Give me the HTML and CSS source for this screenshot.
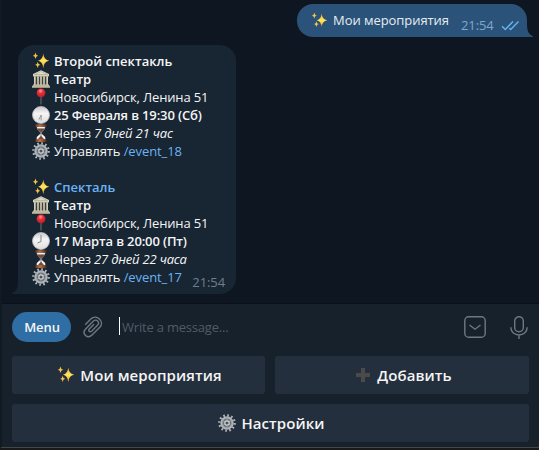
FILE: index.html
```html
<!DOCTYPE html>
<html lang="ru">
<head>
<meta charset="utf-8">
<title>Чат</title>
<link rel="stylesheet" href="styles.css">
</head>
<body>
<svg class="defs" aria-hidden="true">
  <defs>
    <linearGradient id="gold" x1="0" y1="0" x2="0" y2="1"><stop offset="0" stop-color="#f0a72c"/><stop offset=".5" stop-color="#ffe65c"/><stop offset="1" stop-color="#e99a22"/></linearGradient>
    <radialGradient id="red" cx=".45" cy=".3" r=".7"><stop offset="0" stop-color="#ff9a9e"/><stop offset=".4" stop-color="#e8303a"/><stop offset="1" stop-color="#c41a26"/></radialGradient>
    <linearGradient id="face" x1="0" y1="0" x2="0" y2="1"><stop offset="0" stop-color="#c9c9cb"/><stop offset=".4" stop-color="#f4f4f4"/><stop offset="1" stop-color="#dededf"/></linearGradient>
    <linearGradient id="stone" x1="0" y1="0" x2="0" y2="1"><stop offset="0" stop-color="#e6e2cd"/><stop offset="1" stop-color="#c4bfa6"/></linearGradient>
    <linearGradient id="wood" x1="0" y1="0" x2="1" y2="0"><stop offset="0" stop-color="#6b3417"/><stop offset=".4" stop-color="#b8734a"/><stop offset="1" stop-color="#55260f"/></linearGradient>
  </defs>
  <symbol id="sparkles" viewBox="0 0 18 18">
    <path fill="url(#gold)" d="M11.3 1.6Q11.7 8 17.2 8.7Q11.7 9.5 11.3 16.2Q10.7 9.5 6 8.7Q10.7 8 11.3 1.6Z"/>
    <path fill="#f5c544" d="M3.5 .5Q3.7 3.3 6.2 3.7Q3.7 4.1 3.5 7Q3.2 4.1 .9 3.7Q3.2 3.3 3.5 .5ZM5.7 9.8Q5.9 12.4 8.2 12.8Q5.9 13.2 5.7 16Q5.4 13.2 3.2 12.8Q5.4 12.4 5.7 9.8Z"/>
  </symbol>
  <symbol id="temple" viewBox="0 0 18 18">
    <path fill="#3c403c" d="M2 6h14v9H2z"/>
    <path fill="url(#stone)" d="M9 .3L17 4v2.200H1V4zM2 6h1.700v9H2zM5.200 6h1.600v9H5.200zM8.200 6h1.600v9H8.200zM11.200 6h1.600v9h-1.600zM14.300 6H16v9h-1.700zM1 14.500h16v1.500H1zM0 16h18v1.700H0z"/>
    <path fill="none" stroke="#a5a18b" stroke-width=".6" d="M2.500 4.500L9 1.500l6.500 3zM1 6.200h16M0 16h18"/>
  </symbol>
  <symbol id="pin" viewBox="0 0 18 18">
    <path stroke="#6d7379" stroke-width="1" d="M9 8v8.500"/>
    <circle cx="9" cy="4.800" r="4.400" fill="url(#red)"/>
  </symbol>
  <symbol id="clock-half" viewBox="0 0 18 18">
    <circle cx="9" cy="9" r="8.500" fill="url(#face)" stroke="#bcbdc0" stroke-width=".8"/>
    <path fill="none" stroke="#85878b" stroke-width=".8" d="M9.200 9v5.500M9.200 9L7 13.500"/>
  </symbol>
  <symbol id="clock-eight" viewBox="0 0 18 18">
    <circle cx="9" cy="9" r="8.500" fill="url(#face)" stroke="#bcbdc0" stroke-width=".8"/>
    <path fill="none" stroke="#777a7f" stroke-width=".9" d="M9 3v6.500L5.500 11"/>
  </symbol>
  <symbol id="hourglass" viewBox="0 0 18 18">
    <path fill="#7d878f" d="M4.500 2h9c0 4-2.800 5-3.800 7 1 2 3.800 3 3.800 7h-9c0-4 2.800-5 3.800-7-1-2-3.800-3-3.800-7z"/>
    <path fill="#7c4a34" d="M5.500 4.800h7Q12 6.800 9 8.300Q6 6.800 5.500 4.800zM9 11.500l3.500 4h-7z"/>
    <path fill="#f4f4f2" d="M5.200 3h7.600v1.300H5.200zM4.800 13L8.500 10v2L6 15H4.800zM13.200 13L9.500 10v2L12 15h1.200z"/>
    <rect x="3.300" y=".2" width="11.400" height="2.600" rx="1" fill="url(#wood)"/>
    <rect x="3.300" y="15.200" width="11.400" height="2.700" rx="1" fill="url(#wood)"/>
  </symbol>
  <symbol id="gear" viewBox="0 0 18 18">
    <circle cx="9" cy="9" r="7.700" fill="none" stroke="#b0b4b8" stroke-width="2.300" stroke-dasharray="1.700 2.332"/>
    <circle cx="9" cy="9" r="5.600" fill="#6b737a" stroke="#afb4b8" stroke-width="2.200"/>
    <path stroke="#959ca2" stroke-width=".9" d="M9 3.500v11M4.200 6.200l9.600 5.600M4.200 11.800l9.600-5.600"/>
    <circle cx="9" cy="9" r="2.200" fill="#4a535b" stroke="#d1d4d6" stroke-width="1.200"/>
  </symbol>
  <symbol id="plus" viewBox="0 0 18 18"><path fill="#4a4a4a" d="M7 2h4v5h5v4h-5v5H7v-5H2V7h5z"/></symbol>
</svg>

<main class="app">
  <section class="chat">
    <article class="bubble bubble-out">
      <svg class="emoji emoji-small"><use href="#sparkles"/></svg>
      <span class="out-text">Мои мероприятия</span>
      <time class="time time-out">21:54</time>
      <svg class="checks" viewBox="0 0 19 11"><path d="M1 6.300l3.300 3.200L12 1.500M8.300 8.300l1.400 1.200L17.500 1.500"/></svg>
      <svg class="tail tail-out" viewBox="0 0 8 14"><path d="M0 0h2c0 7 1 11 6 13.200V14H0z"/></svg>
    </article>

    <article class="bubble bubble-in">
      <p class="line"><svg class="emoji"><use href="#sparkles"/></svg><b>Второй спектакль</b></p>
      <p class="line"><svg class="emoji"><use href="#temple"/></svg><b>Театр</b></p>
      <p class="line place"><svg class="emoji"><use href="#pin"/></svg><span>Новосибирск, Ленина 51</span></p>
      <p class="line date"><svg class="emoji"><use href="#clock-half"/></svg><b>25 Февраля в 19:30 (Сб)</b></p>
      <p class="line left"><svg class="emoji"><use href="#hourglass"/></svg><span>Через <i>7 дней 21 час</i></span></p>
      <p class="line manage"><svg class="emoji"><use href="#gear"/></svg><span>Управлять <a>/event_18</a></span></p>
      <p class="line"></p>
      <p class="line"><svg class="emoji"><use href="#sparkles"/></svg><b class="link">Спекталь</b></p>
      <p class="line"><svg class="emoji"><use href="#temple"/></svg><b>Театр</b></p>
      <p class="line place"><svg class="emoji"><use href="#pin"/></svg><span>Новосибирск, Ленина 51</span></p>
      <p class="line date"><svg class="emoji"><use href="#clock-eight"/></svg><b>17 Марта в 20:00 (Пт)</b></p>
      <p class="line left"><svg class="emoji"><use href="#hourglass"/></svg><span>Через <i>27 дней 22 часа</i></span></p>
      <p class="line manage"><svg class="emoji"><use href="#gear"/></svg><span>Управлять <a>/event_17</a></span><time class="time time-in">21:54</time></p>
      <svg class="tail tail-in" viewBox="0 0 8 14"><path d="M8 0H6c0 7-1 11-6 13.200V14h8z"/></svg>
    </article>
  </section>

  <section class="panel">
    <div class="composer">
      <button class="menu">Menu</button>
      <svg class="clip" viewBox="0 0 20 22"><path d="M2.200 8.700L7.800 3.100C13.500-2.300 22 5.500 16.800 11.300L9 19C4.500 23.300-1.500 17.700 2.400 13.200L10.200 5.300C13.600 2.300 17.300 6.200 14.500 9.200L8.600 15.200C6.800 16.700 4.800 14.700 6.300 12.900L11 8.200"/></svg>
      <div class="field">Write a message...</div>
      <svg class="keyboard-toggle" viewBox="0 0 22 22"><rect x=".8" y=".8" width="20.400" height="20.400" rx="3.800"/><path d="M5.500 9l5.500 4.200L16.500 9"/></svg>
      <svg class="mic" viewBox="0 0 18 23"><rect x="4.700" y=".8" width="8.600" height="15" rx="4.300"/><path d="M.8 11.200C.8 21.500 17.200 21.500 17.200 11.200M9 19v4"/></svg>
    </div>
    <div class="keys">
      <button class="key"><svg class="emoji key-emoji"><use href="#sparkles"/></svg>Мои мероприятия</button>
      <button class="key"><svg class="emoji key-emoji"><use href="#plus"/></svg>Добавить</button>
      <button class="key key-wide"><svg class="emoji key-emoji"><use href="#gear"/></svg>Настройки</button>
    </div>
  </section>
</main>
</body>
</html>
```
FILE: styles.css
```css
* { box-sizing: border-box; }
body {
  margin: 0;
  height: 450px;
  overflow: hidden;
  background: #1b1a19;
  font: 13px/18px "Open Sans", "Noto Sans", sans-serif;
  color: #f5f5f5;
}
.defs { position: absolute; width: 0; height: 0; }
.app {
  display: flex;
  flex-direction: column;
  height: 448px;
  border-left: 2px solid #101a23;
  border-bottom: 1px solid #464646;
}
.chat {
  height: 304px;
  padding: 4px 12px 0 16px;
  display: flex;
  flex-direction: column;
  background: #0e1621;
  border-bottom: 1px solid #09121a;
}
.bubble { position: relative; }
.bubble-out {
  align-self: flex-end;
  display: flex;
  align-items: center;
  width: 230px;
  height: 33px;
  padding-left: 14px;
  background: #2b5278;
  border-radius: 16px 16px 0 16px;
  color: #e4ecf2;
}
.out-text { width: 118px; margin: -1px 0 0 5px; letter-spacing: -.06px; white-space: nowrap; }
.time { font-size: 13px; letter-spacing: -.1px; }
.time-out { margin: 9px 0 0 10px; color: #7da8d3; }
.checks {
  width: 19px;
  height: 11px;
  margin: 9px 0 0 7px;
  fill: none;
  stroke: #67b2ee;
  stroke-width: 1.5;
}
.tail { position: absolute; bottom: 0; width: 8px; height: 14px; }
.tail-out { right: -6px; fill: #2b5278; }
.tail-in { left: -6px; fill: #182533; }
.bubble-in {
  width: 218px;
  height: 249px;
  margin-top: 8px;
  padding: 7px 11px 8px 14px;
  background: #182533;
  border-radius: 16px 16px 16px 0;
}
.line {
  display: flex;
  align-items: center;
  height: 18px;
  margin: 0;
  white-space: nowrap;
}
.place { letter-spacing: -.14px; }
.date { letter-spacing: -.14px; }
.left { letter-spacing: -.2px; }
.manage { letter-spacing: -.09px; }
.emoji { flex: none; width: 18px; height: 18px; margin-right: 4px; }
.emoji-small { width: 17px; height: 17px; margin-right: 0; }
.key-emoji { margin-right: 5px; }
b { font-weight: 600; }
a, .link { color: #6ab3f3; }
.time-in { margin: 10px 0 0 auto; color: #6d7f8f; }
.panel { flex: 1; padding: 8px 10px 5px; background: #17212b; }
.composer { display: flex; align-items: center; height: 30px; }
button { border: 0; font-family: inherit; font-weight: 600; color: #f5f5f5; }
.menu {
  width: 59px;
  height: 30px;
  padding: 0 0 0 1px;
  border-radius: 15px;
  background: #2f6ea5;
  font-size: 13px;
  letter-spacing: -.1px;
}
.clip, .keyboard-toggle, .mic { flex: none; fill: none; stroke: #6c7883; stroke-width: 1.4; }
.clip { width: 20px; height: 22px; margin-left: 12px; }
.field {
  flex: 1;
  height: 18px;
  margin: -3px 0 0 16px;
  padding-left: 2px;
  border-left: 1px solid #fff;
  line-height: 20px;
  letter-spacing: -.2px;
  color: #505b66;
}
.keyboard-toggle { width: 22px; height: 22px; }
.mic { width: 18px; height: 23px; margin: 1px 1px 0 24px; }
.keys {
  display: grid;
  grid-template-columns: 253px 254px;
  gap: 10px;
  margin-top: 14px;
}
.key {
  display: flex;
  align-items: center;
  justify-content: center;
  height: 38px;
  padding: 0 0 0 2px;
  border-radius: 3px;
  background: #242f3d;
  font-size: 15px;
  letter-spacing: .08px;
}
.key-wide { grid-column: span 2; }
```
